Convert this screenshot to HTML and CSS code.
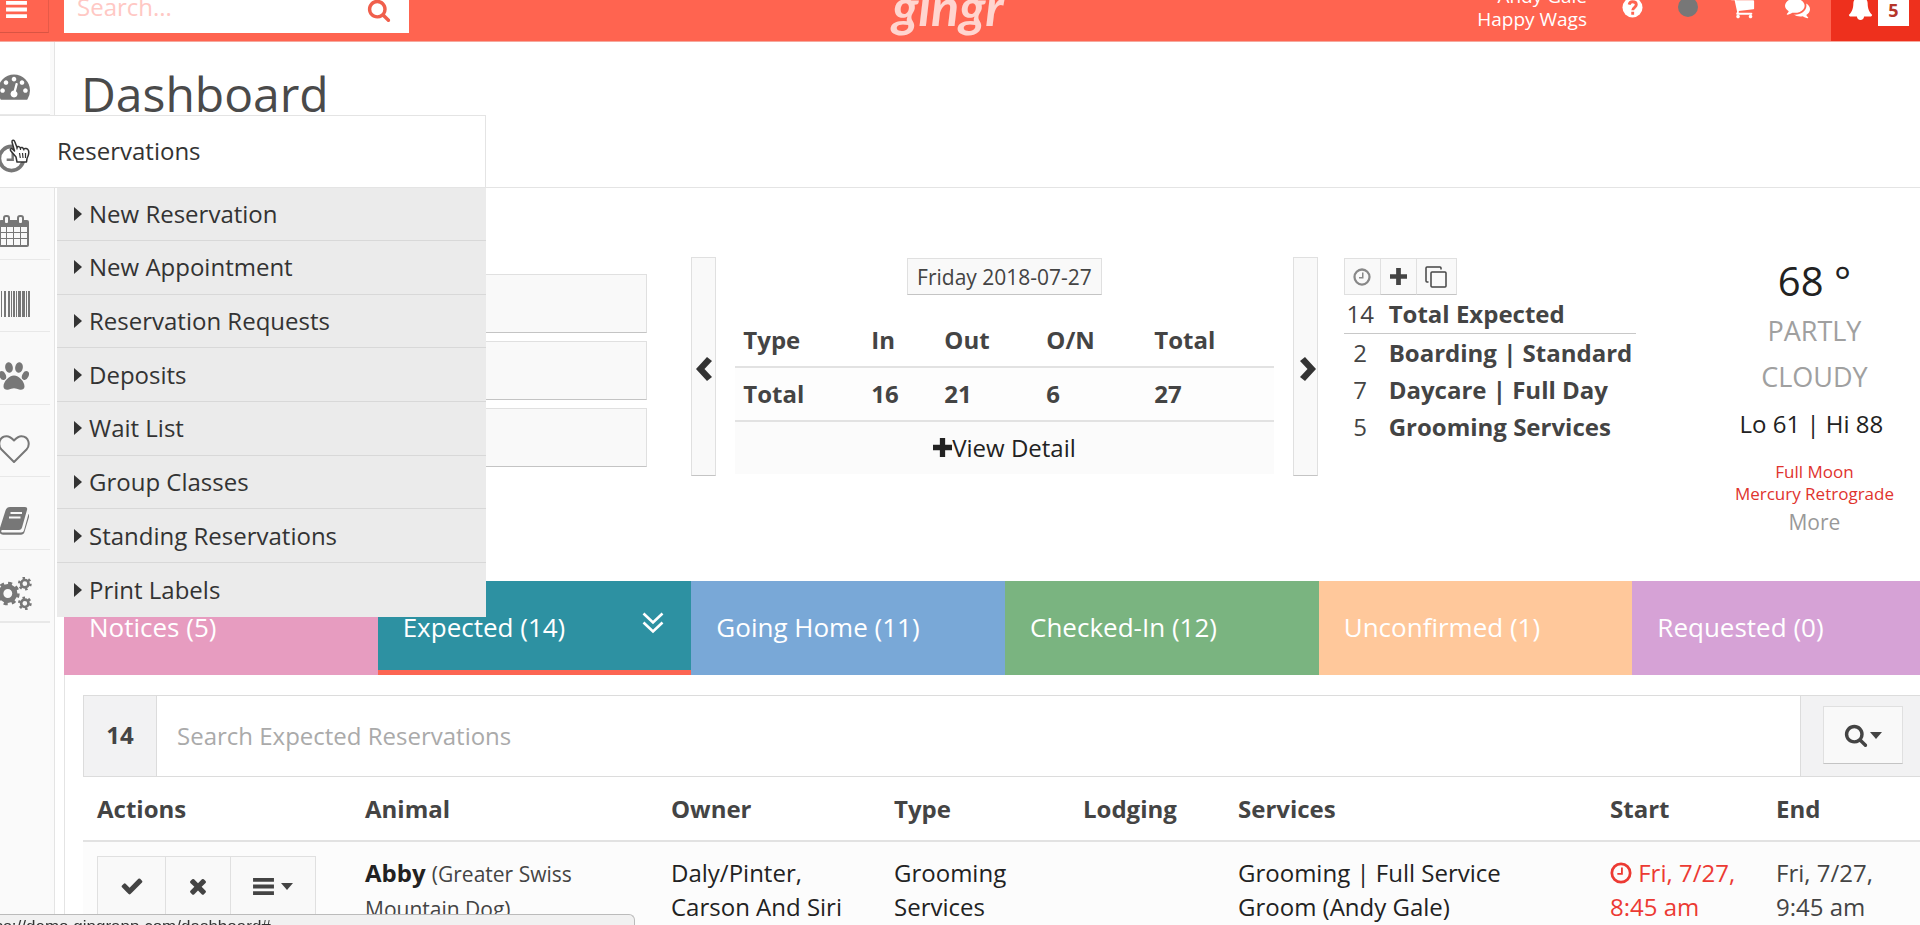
FILE: index.html
```html
<!DOCTYPE html>
<html lang="en">
<head>
<meta charset="utf-8">
<title>Dashboard</title>
<link rel="stylesheet" href="styles.css">
</head>
<body>
<svg class="defs" aria-hidden="true">
  <symbol id="i-search" viewBox="0 0 1792 1792"><path d="M1216 832q0-185-131.5-316.5t-316.5-131.5-316.5 131.5-131.5 316.5 131.5 316.5 316.5 131.5 316.5-131.5 131.5-316.5zm512 832q0 52-38 90t-90 38q-54 0-90-38l-343-342q-179 124-399 124-143 0-273.5-55.5t-225-150-150-225-55.5-273.5 55.5-273.5 150-225 225-150 273.5-55.5 273.5 55.5 225 150 150 225 55.5 273.5q0 220-124 399l343 343q37 37 37 90z"/></symbol>
  <symbol id="i-bars" viewBox="0 0 22 20"><path d="M0 1h22v4H0zM0 8h22v4H0zM0 15h22v4H0z"/></symbol>
  <symbol id="i-check" viewBox="0 0 1792 1792"><path d="M1671 566q0 40-28 68l-724 724-136 136q-28 28-68 28t-68-28l-136-136-362-362q-28-28-28-68t28-68l136-136q28-28 68-28t68 28l294 295 656-657q28-28 68-28t68 28l136 136q28 28 28 68z"/></symbol>
  <symbol id="i-times" viewBox="0 0 1792 1792"><path d="M1490 1322q0 40-28 68l-136 136q-28 28-68 28t-68-28l-294-294-294 294q-28 28-68 28t-68-28l-136-136q-28-28-28-68t28-68l294-294-294-294q-28-28-28-68t28-68l136-136q28-28 68-28t68 28l294 294 294-294q28-28 68-28t68 28l136 136q28 28 28 68t-28 68l-294 294 294 294q28 28 28 68z"/></symbol>
  <symbol id="i-cart" viewBox="0 0 1792 1792"><path d="M704 1536q0 52-38 90t-90 38-90-38-38-90 38-90 90-38 90 38 38 90zm896 0q0 52-38 90t-90 38-90-38-38-90 38-90 90-38 90 38 38 90zm128-1088v512q0 24-16.5 42.5t-40.5 21.5l-1044 122q13 60 13 70 0 16-24 64h920q26 0 45 19t19 45-19 45-45 19h-1024q-26 0-45-19t-19-45q0-11 8-31.5t16-36 21.5-40 15.5-29.5l-177-823h-204q-26 0-45-19t-19-45 19-45 45-19h256q16 0 28.5 6.5t19.5 15.5 13 24.5 8 26 5.5 29.5 4.5 26h1201q26 0 45 19t19 45z"/></symbol>
  <symbol id="i-comments" viewBox="0 0 1792 1792"><path d="M1408 768q0 139-94 257t-256.5 186.5-353.5 68.5q-86 0-176-16-124 88-278 128-36 9-86 16h-3q-11 0-20.5-8t-11.5-21q-1-3-1-6.5t.5-6.5 2-6l2.5-5 3.5-5.5 4-5 4.500-5 4-4.500q5-6 23-25t26-29.500 22.500-29 25-38.500 20.500-44q-124-72-195-177t-71-224q0-139 94-257t256.500-186.500 353.500-68.500 353.500 68.500 256.500 186.500 94 257zm384 256q0 120-71 224.500t-195 176.500q10 24 20.500 44t25 38.500 22.500 29 26 29.500 23 25q1 1 4 4.500t4.500 5 4 5 3.500 5.500l2.500 5 2 6 .5 6.500-1 6.500q-3 14-13 22t-22 7q-50-7-86-16-154-40-278-128-90 16-176 16-271 0-472-132 58 4 88 4 161 0 309-45t264-129q125-92 192-212t67-254q0-77-23-152 129 71 204 178t75 230z"/></symbol>
  <symbol id="i-bell" viewBox="0 0 1792 1792"><path d="M1728 1408q0 52-38 90t-90 38h-448q0 106-75 181t-181 75-181-75-75-181h-448q-52 0-90-38t-38-90q50-42 91-88t85-119.5 74.5-158.5 50-206 19.5-260q0-152 117-282.5t307-158.5q-8-19-8-39 0-40 28-68t68-28 68 28 28 68q0 20-8 39 190 28 307 158.5t117 282.5q0 139 19.5 260t50 206 74.5 158.5 85 119.5 91 88z"/></symbol>
  <symbol id="i-gauge" viewBox="0 0 1792 1792"><path d="M384 1152q0-53-37.5-90.5t-90.5-37.5-90.5 37.5-37.5 90.5 37.5 90.5 90.5 37.5 90.5-37.5 37.5-90.5zm192-448q0-53-37.5-90.5t-90.5-37.5-90.5 37.5-37.5 90.5 37.5 90.5 90.5 37.5 90.5-37.5 37.5-90.5zm428 481l101-382q6-26-7.5-48.5t-38.5-29.5-48 6.5-30 39.5l-101 382q-60 5-107 43.5t-63 98.5q-20 77 20 146t117 89 146-20 89-117q16-60-6-117t-72-91zm660-33q0-53-37.5-90.5t-90.5-37.5-90.5 37.5-37.5 90.5 37.5 90.5 90.5 37.5 90.5-37.5 37.5-90.5zm-640-640q0-53-37.5-90.5t-90.5-37.5-90.5 37.5-37.5 90.5 37.5 90.5 90.5 37.5 90.5-37.5 37.5-90.5zm448 192q0-53-37.5-90.5t-90.5-37.5-90.5 37.5-37.5 90.5 37.5 90.5 90.5 37.5 90.5-37.5 37.5-90.5zm320 448q0 261-141 483-19 29-54 29h-1402q-35 0-54-29-141-221-141-483 0-182 71-348t191-286 286-191 348-71 348 71 286 191 191 286 71 348z"/></symbol>
  <symbol id="i-clock" viewBox="0 0 24 24"><g fill="none" stroke="currentColor"><circle cx="12" cy="12" r="10" stroke-width="3"/><path d="M13 6v7H8" stroke-width="2"/></g></symbol>
  <symbol id="i-calendar" viewBox="0 0 30 32"><path d="M2 5h26a2 2 0 0 1 2 2v23a2 2 0 0 1-2 2H2a2 2 0 0 1-2-2V7a2 2 0 0 1 2-2z"/><path fill="#f9f9f9" d="M2 12h5v5H2zM8 12h6v5H8zM15 12h6v5h-6zM22 12h6v5h-6zM2 18h5v5H2zM8 18h6v5H8zM15 18h6v5h-6zM22 18h6v5h-6zM2 24h5v6H2zM8 24h6v6H8zM15 24h6v6h-6zM22 24h6v6h-6z"/><rect x="5" y="1" width="5" height="8" rx="2" fill="#f9f9f9" stroke="currentColor" stroke-width="2"/><rect x="19" y="1" width="5" height="8" rx="2" fill="#f9f9f9" stroke="currentColor" stroke-width="2"/></symbol>
  <symbol id="i-barcode" viewBox="0 0 32 26"><path d="M0 0h2v26H0zM3 0h1v26H3zM6 0h2v26H6zM10 0h2v26h-2zM13 0h1v26h-1zM15 0h2v26h-2zM18 0h1v26h-1zM20 0h3v26h-3zM24 0h3v26h-3zM28 0h1v26h-1zM30 0h2v26h-2z"/></symbol>
  <symbol id="i-paw" viewBox="0 0 30 28"><ellipse cx="10" cy="5.500" rx="3.800" ry="5.300" transform="rotate(-10 10 5.500)"/><ellipse cx="20" cy="5.500" rx="3.800" ry="5.300" transform="rotate(10 20 5.500)"/><ellipse cx="3.600" cy="13.500" rx="3.200" ry="4.700" transform="rotate(-25 3.600 13.500)"/><ellipse cx="26.400" cy="13.500" rx="3.200" ry="4.700" transform="rotate(25 26.400 13.500)"/><path d="M15 13.500c5 0 10.500 6 10.500 11 0 3-2.500 3.500-4.500 3.200-2.500-.5-4-1.500-6-1.500s-3.500 1-6 1.500c-2 .3-4.500-.2-4.500-3.200 0-5 5.500-11 10.500-11z"/></symbol>
  <symbol id="i-heart" viewBox="0 0 32 28"><path fill="none" stroke="currentColor" stroke-width="2" stroke-linejoin="round" d="M16 27 3.500 14.500C-.5 10 1 1.500 8.500 1.200 12 1 14.500 4 16 5.500c1.500-1.500 4-4.500 7.500-4.300C31 1.500 32.500 10 28.500 14.500z"/></symbol>
  <symbol id="i-book" viewBox="0 0 30 28"><path d="M11 0h15c2 0 2.500 1.500 2 3l-5 17.500c-.5 1.500-1.500 2.500-3 2.500H4c-2.500 0-2 2-1 2.500h19c1.500 0 2.500-.8 3-2.200L29.500 7c1 1 .9 2 .5 3l-4.500 15c-.5 1.700-2 2.800-3.500 2.800H4c-3 0-4.500-3-3.500-5.500L6.500 3.500C7.500 1 8.500 0 11 0z"/><path fill="none" stroke="#f9f9f9" stroke-width="2" d="M11.500 6h11.500M10 10.500h11.500"/></symbol>
  <symbol id="i-cogs" viewBox="0 0 34 32"><g fill="none" stroke="currentColor"><circle cx="11" cy="16" r="6.800" stroke-width="5"/><circle cx="11" cy="16" r="10" stroke-width="3" stroke-dasharray="3.900 3.950"/><circle cx="27.500" cy="6.500" r="3.600" stroke-width="2.600"/><circle cx="27.500" cy="6.500" r="5.500" stroke-width="2.400" stroke-dasharray="2.400 3.360"/><circle cx="27.500" cy="25.500" r="3.600" stroke-width="2.600"/><circle cx="27.500" cy="25.500" r="5.500" stroke-width="2.400" stroke-dasharray="2.400 3.360"/></g></symbol>
  <symbol id="i-help" viewBox="0 0 22 22"><circle cx="11" cy="11" r="10.500"/><path fill="none" stroke="#ff6450" stroke-width="3" d="M7.500 8c.5-2.500 2-3 3.500-3 2.500 0 4 1.500 4 3.200 0 2.600-3.800 2.600-3.800 5.800M11.200 15.500v3"/></symbol>
  <symbol id="i-left" viewBox="0 0 16 24"><path d="M11 0 16 4 8.500 12 16 20l-5 4L0 12z"/></symbol>
  <symbol id="i-right" viewBox="0 0 16 24"><path d="M5 0 0 4l7.500 8L0 20l5 4 11-12z"/></symbol>
  <symbol id="i-plus" viewBox="0 0 18 18"><path d="M6.500 0h5v6.500H18v5h-6.500V18h-5v-6.500H0v-5h6.500z"/></symbol>
  <symbol id="i-copy" viewBox="0 0 22 22"><g fill="none" stroke="currentColor" stroke-width="1.500"><rect x="6" y="6" width="15" height="15" rx="1"/><path d="M3.500 16H2a1 1 0 0 1-1-1V2a1 1 0 0 1 1-1h13a1 1 0 0 1 1 1v1.500"/></g></symbol>
  <symbol id="i-down2" viewBox="0 0 22 22"><path fill="none" stroke="currentColor" stroke-width="2.600" d="m1.500 1.500 9.500 9 9.500-9M1.500 10.500l9.500 9 9.500-9"/></symbol>
  <symbol id="i-caret" viewBox="0 0 12 7"><path d="M0 0h12L6 7z"/></symbol>
  <symbol id="i-tri" viewBox="0 0 8 14"><path d="M0 0v14l8-7z"/></symbol>
</svg>

<header class="topbar">
  <button class="burger" aria-label="Menu"><svg width="21" height="19"><use href="#i-bars"/></svg></button>
  <form class="quick">
    <input class="quick-input" type="text" placeholder="Search..." aria-label="Search">
    <button class="quick-go" type="button" aria-label="Search"><svg width="24" height="24"><use href="#i-search"/></svg></button>
  </form>
  <a class="brand" href="#">gingr</a>
  <div class="tools">
    <div class="who">Andy Gale<br>Happy Wags</div>
    <a href="#" class="tool" aria-label="Help"><svg width="21" height="21"><use href="#i-help"/></svg></a>
    <span class="tool"><span class="dot"></span></span>
    <a href="#" class="tool" aria-label="Cart"><svg width="25" height="25"><use href="#i-cart"/></svg></a>
    <a href="#" class="tool" aria-label="Messages"><svg width="25" height="25"><use href="#i-comments"/></svg></a>
  </div>
  <a class="alerts" href="#" aria-label="Alerts"><svg width="25" height="25"><use href="#i-bell"/></svg><span class="count">5</span></a>
</header>

<div class="shell">
  <nav class="side">
    <ul class="side-list">
      <li class="side-item plain"><a href="#" aria-label="Dashboard"><svg width="32" height="32"><use href="#i-gauge"/></svg></a></li>
      <li class="side-item">
        <div class="flyout">
          <a class="fly-title" href="#"><span class="fly-icon"><svg width="29" height="29"><use href="#i-clock"/></svg></span>Reservations</a>
          <ul class="fly-list">
            <li><a href="#"><svg width="8" height="14"><use href="#i-tri"/></svg>New Reservation</a></li>
            <li><a href="#"><svg width="8" height="14"><use href="#i-tri"/></svg>New Appointment</a></li>
            <li><a href="#"><svg width="8" height="14"><use href="#i-tri"/></svg>Reservation Requests</a></li>
            <li><a href="#"><svg width="8" height="14"><use href="#i-tri"/></svg>Deposits</a></li>
            <li><a href="#"><svg width="8" height="14"><use href="#i-tri"/></svg>Wait List</a></li>
            <li><a href="#"><svg width="8" height="14"><use href="#i-tri"/></svg>Group Classes</a></li>
            <li><a href="#"><svg width="8" height="14"><use href="#i-tri"/></svg>Standing Reservations</a></li>
            <li><a href="#"><svg width="8" height="14"><use href="#i-tri"/></svg>Print Labels</a></li>
          </ul>
        </div>
      </li>
      <li class="side-item"><a href="#" aria-label="Calendar"><svg width="30" height="32"><use href="#i-calendar"/></svg></a></li>
      <li class="side-item"><a href="#" aria-label="Retail"><svg width="32" height="26"><use href="#i-barcode"/></svg></a></li>
      <li class="side-item"><a href="#" aria-label="Animals"><svg width="30" height="28"><use href="#i-paw"/></svg></a></li>
      <li class="side-item"><a href="#" aria-label="Owners"><svg width="32" height="28"><use href="#i-heart"/></svg></a></li>
      <li class="side-item"><a href="#" aria-label="Reports"><svg width="30" height="28"><use href="#i-book"/></svg></a></li>
      <li class="side-item"><a href="#" aria-label="Settings"><svg width="36" height="33"><use href="#i-cogs"/></svg></a></li>
    </ul>
  </nav>

  <main class="main">
    <div class="page-head"><h1>Dashboard</h1></div>

    <section class="overview">
      <div class="shortcuts">
        <button aria-label="Shortcut 1"></button>
        <button aria-label="Shortcut 2"></button>
        <button aria-label="Shortcut 3"></button>
      </div>

      <div class="carousel">
        <button class="step" aria-label="Previous day"><svg width="16" height="24"><use href="#i-left"/></svg></button>
        <div class="day">
          <button class="date">Friday 2018-07-27</button>
          <table class="tally">
            <colgroup><col class="t1"><col class="t2"><col class="t3"><col class="t4"><col></colgroup>
            <thead><tr><th>Type</th><th>In</th><th>Out</th><th>O/N</th><th>Total</th></tr></thead>
            <tbody>
              <tr><th>Total</th><th>16</th><th>21</th><th>6</th><th>27</th></tr>
              <tr class="more-row"><td colspan="5"><a href="#"><svg width="19" height="19"><use href="#i-plus"/></svg>View Detail</a></td></tr>
            </tbody>
          </table>
        </div>
        <button class="step next" aria-label="Next day"><svg width="16" height="24"><use href="#i-right"/></svg></button>
      </div>

      <div class="expected">
        <div class="mini">
          <button class="faded" aria-label="Time"><svg width="18" height="18"><use href="#i-clock"/></svg></button>
          <button aria-label="Add"><svg width="17" height="17"><use href="#i-plus"/></svg></button>
          <button class="copy" aria-label="Copy"><svg width="22" height="22"><use href="#i-copy"/></svg></button>
        </div>
        <dl class="counts">
          <div class="sum"><dt>14</dt><dd>Total Expected</dd></div>
          <div><dt>2</dt><dd>Boarding | Standard</dd></div>
          <div><dt>7</dt><dd>Daycare | Full Day</dd></div>
          <div><dt>5</dt><dd>Grooming Services</dd></div>
        </dl>
      </div>

      <div class="weather">
        <div class="temp">68 °</div>
        <div class="sky">PARTLY<br>CLOUDY</div>
        <div class="range">Lo 61 | Hi 88</div>
        <div class="warn">Full Moon<br>Mercury Retrograde</div>
        <a class="more" href="#">More</a>
      </div>
    </section>

    <div class="tabs">
      <a href="#" class="tab pink">Notices (5)</a>
      <a href="#" class="tab teal">Expected (14)<svg width="22" height="22"><use href="#i-down2"/></svg></a>
      <a href="#" class="tab blue">Going Home (11)</a>
      <a href="#" class="tab green">Checked-In (12)</a>
      <a href="#" class="tab peach">Unconfirmed (1)</a>
      <a href="#" class="tab plum">Requested (0)</a>
    </div>

    <section class="panel">
      <div class="finder">
        <span class="addon">14</span>
        <input type="text" placeholder="Search Expected Reservations" aria-label="Search Expected Reservations">
        <span class="addon wide"><button class="find" aria-label="Search options"><svg width="24" height="24"><use href="#i-search"/></svg><svg width="12" height="7"><use href="#i-caret"/></svg></button></span>
      </div>
      <table class="list">
        <colgroup><col class="c1"><col class="c2"><col class="c3"><col class="c4"><col class="c5"><col class="c6"><col class="c7"><col></colgroup>
        <thead><tr><th>Actions</th><th>Animal</th><th>Owner</th><th>Type</th><th>Lodging</th><th>Services</th><th>Start</th><th>End</th></tr></thead>
        <tbody><tr>
          <td><div class="acts">
            <button aria-label="Check in"><svg width="24" height="24"><use href="#i-check"/></svg></button><button aria-label="Cancel"><svg width="24" height="24"><use href="#i-times"/></svg></button><button aria-label="More actions"><svg width="21" height="19"><use href="#i-bars"/></svg><svg width="12" height="7"><use href="#i-caret"/></svg></button>
          </div></td>
          <td><a href="#"><b>Abby</b></a> <small>(Greater Swiss<br>Mountain Dog)</small></td>
          <td><a href="#">Daly/Pinter,<br>Carson And Siri</a></td>
          <td><a href="#">Grooming<br>Services</a></td>
          <td></td>
          <td><a href="#">Grooming | Full Service<br>Groom (Andy Gale)</a></td>
          <td class="late"><svg width="22" height="22"><use href="#i-clock"/></svg> Fri, 7/27,<br>8:45 am</td>
          <td>Fri, 7/27,<br>9:45 am</td>
        </tr></tbody>
      </table>
    </section>
  </main>
</div>

<div class="status"><span>https://demo.gingrapp.com/dashboard#</span></div>
<svg class="pointer" width="22" height="24" viewBox="0 0 22 24" aria-hidden="true"><path fill="#fff" stroke="#333" stroke-width="1.500" stroke-linejoin="round" d="M8 23 7 18 1.500 11.500C.8 9.500 2.500 9 4 10.500L5.500 12 3 3C2.800 1 5 .5 5.700 2.500L8 8.500C9 7 11 7.500 11.200 9 12.500 7.800 14 8.500 14.500 10 16 8.800 18.500 9.500 19.500 11.500c1 3-.5 6-1.500 8l-.5 3.500z"/><path stroke="#333" stroke-width="1.200" d="m10.500 14 .8 5M13.500 14l.5 5M16.500 14v5M8 10.500V9M11.500 11V9M14.800 11.500V10"/></svg>
</body>
</html>
```

FILE: styles.css
```css
* { box-sizing: border-box; }

body {
  margin: 0;
  height: 100vh;
  overflow: hidden;
  background: #fff;
  color: #444;
  font-family: "Open Sans", "Noto Sans", sans-serif;
  font-size: 24px;
  line-height: 34px;
}

a { color: #222; text-decoration: none; }
ul, dl, dd { margin: 0; padding: 0; list-style: none; }
button, input { font: inherit; color: inherit; border-radius: 0; padding: 0; margin: 0; }
button { cursor: pointer; }
svg { fill: currentColor; flex: none; }
.defs { display: none; }

/* top bar */
.topbar {
  display: flex;
  height: 42px;
  overflow: hidden;
  position: relative;
  background: #ff6450;
  border-bottom: 1px solid #f5a99e;
  color: #fff;
}
.burger {
  width: 49px;
  height: 33px;
  padding: 0 15px 14px 0;
  border: 0;
  border-right: 1px solid #e65a48;
  border-bottom: 1px solid #d95443;
  background: none;
  line-height: 0;
  display: flex;
  align-items: center;
  justify-content: center;
}
.quick {
  display: flex;
  align-items: center;
  width: 345px;
  height: 54px;
  margin: -21px 0 0 15px;
  padding: 2px 18px 0 13px;
  background: #fff;
  color: #ff6450;
}
.quick-input { flex: 1; min-width: 0; border: 0; outline: 0; background: none; height: 34px; }
.quick-input::placeholder { color: #ffc8c4; opacity: 1; }
.quick-go { border: 0; background: none; color: #f05f4c; line-height: 0; padding-top: 6px; }
.brand {
  position: absolute;
  left: 50%;
  top: -24px;
  width: 140px;
  margin-left: -82px;
  text-align: center;
  color: #ffd5cf;
  font: italic 700 52px/60px Lato, sans-serif;
}
.tools { display: flex; margin: 0 6px 0 auto; align-items: flex-start; }
.who { margin-top: -15px; font-size: 19px; line-height: 23px; text-align: right; padding-right: 18px; }
.tool { width: 55px; height: 14px; display: flex; align-items: center; justify-content: center; color: #fff; }
.dot { width: 20px; height: 20px; border-radius: 50%; background: #777; flex: none; }
.alerts { display: flex; width: 89px; padding-left: 17px; gap: 5px; background: #ee301d; color: #fff; }
.alerts svg { margin-top: -5px; }
.count { width: 31px; height: 36px; margin-top: -10px; background: #fff; color: #b5352a; font-size: 18px; line-height: 40px; font-weight: 700; text-align: center; }

/* side navigation */
.shell { display: flex; align-items: stretch; height: calc(100vh - 42px); }
.side { flex: none; width: 77px; margin-left: -22px; padding-right: 4px; border-right: 1px solid #e4e4e4; background: #fafafa; color: #777; }
.side-list { display: grid; grid-template-rows: repeat(8, 1fr); height: 581px; border-bottom: 1px solid #e8e8e8; }
.side-item { position: relative; border-bottom: 1px solid #e8e8e8; }
.side-item > a { display: flex; height: 100%; padding-top: 17px; align-items: center; justify-content: center; color: #777; background: #f9f9f9; }
.side-item.plain > a { background: #fff; }
.flyout { position: absolute; z-index: 5; top: 0; left: 0; width: 508px; }
.fly-title { display: flex; align-items: center; height: 73px; background: #fff; border: 1px solid #e4e4e4; color: #333; }
.fly-icon { width: 78px; padding: 14px 0 0 18px; color: #777; line-height: 0; }
.fly-list { display: grid; grid-template-rows: repeat(8, 1fr); height: 429px; margin-left: 79px; background: #ebebeb; }
.fly-list li { border-bottom: 1px solid #d8d8d8; }
.fly-list li:last-child { border-bottom: 0; }
.fly-list a { display: flex; align-items: center; gap: 7px; height: 100%; padding-left: 17px; color: #333; }

/* page */
.main { flex: 1; min-width: 0; overflow: hidden; }
.page-head { height: 146px; padding: 20px 26px; border-bottom: 1px solid #e4e4e4; }
h1 { margin: 0; font-size: 48px; line-height: 64px; font-weight: 400; color: #4a4a4a; }

.overview { display: grid; grid-template-columns: 609fr 652fr 347fr 229fr; height: 393px; padding-left: 27px; padding-top: 69px; align-items: start; }
.shortcuts { display: grid; gap: 8px; padding: 17px 44px 0 0; }
.shortcuts button { height: 59px; }
.shortcuts button, .step, .date, .mini button, .find, .acts button { background: #f9f9f9; border: 1px solid #e0e0e0; border-bottom-color: #c4c4c4; color: #444; }

.carousel { display: flex; justify-content: space-between; gap: 19px; padding-right: 26px; }
.step { width: 25px; height: 219px; display: flex; align-items: center; justify-content: center; padding-top: 4px; flex: none; color: #333; }
.step.next { padding-left: 6px; }
.day { flex: 1; text-align: center; }
.date { display: inline-block; height: 37px; padding: 0 9px; margin-top: 1px; font-size: 21px; line-height: 34px; vertical-align: top; }
.tally { width: 100%; margin-top: 18px; border-collapse: collapse; table-layout: fixed; text-align: left; }
.tally th, .tally td { height: 54px; padding: 0 8px; }
.tally thead th { border-bottom: 2px solid #e2e2e2; }
.tally tbody tr { background: #fdfdfd; }
.tally .more-row { background: #fbfbfb; }
.tally .more-row td { height: 53px; border-top: 2px solid #e2e2e2; text-align: center; }
.more-row a { display: inline-flex; align-items: center; }
.t1 { width: 128px; }
.t2 { width: 73px; }
.t3 { width: 102px; }
.t4 { width: 108px; }

.mini { display: flex; padding-top: 1px; }
.mini button { width: 37px; height: 37px; display: flex; align-items: center; justify-content: center; }
.mini button + button { margin-left: -1px; }
.mini .copy { width: 41px; }
.mini .faded { color: #888; border-bottom-color: #e0e0e0; }
.counts { width: 292px; }
.counts div { display: flex; height: 37px; line-height: 38px; }
.counts .sum { height: 39px; border-bottom: 1px solid #c8c8c8; }
.counts dt { width: 33px; text-align: center; }
.counts dd { margin-left: 12px; font-weight: 700; white-space: nowrap; }

.weather { padding-left: 18px; text-align: center; }
.temp { font-size: 40px; line-height: 48px; color: #222; }
.sky { padding-top: 3px; font-size: 27px; line-height: 46px; color: #a0a0a0; }
.range { padding-right: 6px; line-height: 48px; color: #222; }
.warn { margin-top: 13px; font-size: 17px; line-height: 22px; color: #e0332e; }
.more { display: block; font-size: 21px; line-height: 34px; color: #999; }

.tabs { display: flex; margin: 0 -26px 0 9px; }
.tab { flex: 1; display: flex; align-items: center; justify-content: space-between; height: 94px; padding: 3px 27px 0 25px; color: #fff; font-size: 26px; border-bottom: 5px solid transparent; }
.tab svg { margin-bottom: 8px; }
.pink { background: #e79cc0; }
.teal { background: #2d91a2; border-bottom-color: #fc6553; }
.blue { background: #79a8d7; }
.green { background: #7ab480; }
.peach { background: #ffc89b; }
.plum { background: #d6a2d6; }

.panel { height: 260px; margin: 0 -6px 0 9px; padding: 20px 0 0 18px; border-left: 1px solid #e4e4e4; }
.finder { display: flex; height: 82px; border: 1px solid #dcdcdc; }
.finder input { flex: 1; min-width: 0; padding: 0 20px; border: 0; outline: 0; background: #fff; }
.finder input::placeholder { color: #aaa; opacity: 1; }
.addon { display: flex; align-items: center; justify-content: center; width: 73px; padding-bottom: 2px; background: #f2f2f3; border-right: 1px solid #dcdcdc; font-weight: 700; }
.addon.wide { width: 125px; border-right: 0; border-left: 1px solid #dcdcdc; }
.find { width: 80px; height: 58px; display: flex; gap: 2px; align-items: center; justify-content: center; }

.list { width: 100%; border-collapse: collapse; table-layout: fixed; text-align: left; }
.list th { height: 64px; padding: 0 14px; border-bottom: 2px solid #e2e2e2; }
.list td { padding: 14px 14px 20px; vertical-align: top; background: #fcfcfc; }
.list small { font-size: 21px; }
.list b { color: #222; }
.c1 { width: 268px; }
.c2 { width: 306px; }
.c3 { width: 223px; }
.c4 { width: 189px; }
.c5 { width: 155px; }
.c6 { width: 372px; }
.c7 { width: 166px; }
.acts { display: flex; }
.acts button { display: flex; align-items: center; justify-content: center; gap: 7px; width: 69px; height: 60px; }
.acts button + button { width: 66px; margin-left: -1px; }
.acts button + button + button { width: 86px; }
.late { color: #ec3a33; }
.late svg { vertical-align: -2px; }

/* browser status line */
.status { position: fixed; left: 0; bottom: 0; z-index: 9; width: 635px; height: 11px; overflow: hidden; background: #f1f1f1; border: 1px solid #bbb; border-width: 1px 1px 0 0; border-radius: 0 6px 0 0; color: #333; font: 17px/20px "Liberation Sans", Arial, sans-serif; }
.status span { display: block; margin: 2px 0 0 -25px; }
.pointer { position: fixed; left: 9px; top: 139px; z-index: 9; }
```
